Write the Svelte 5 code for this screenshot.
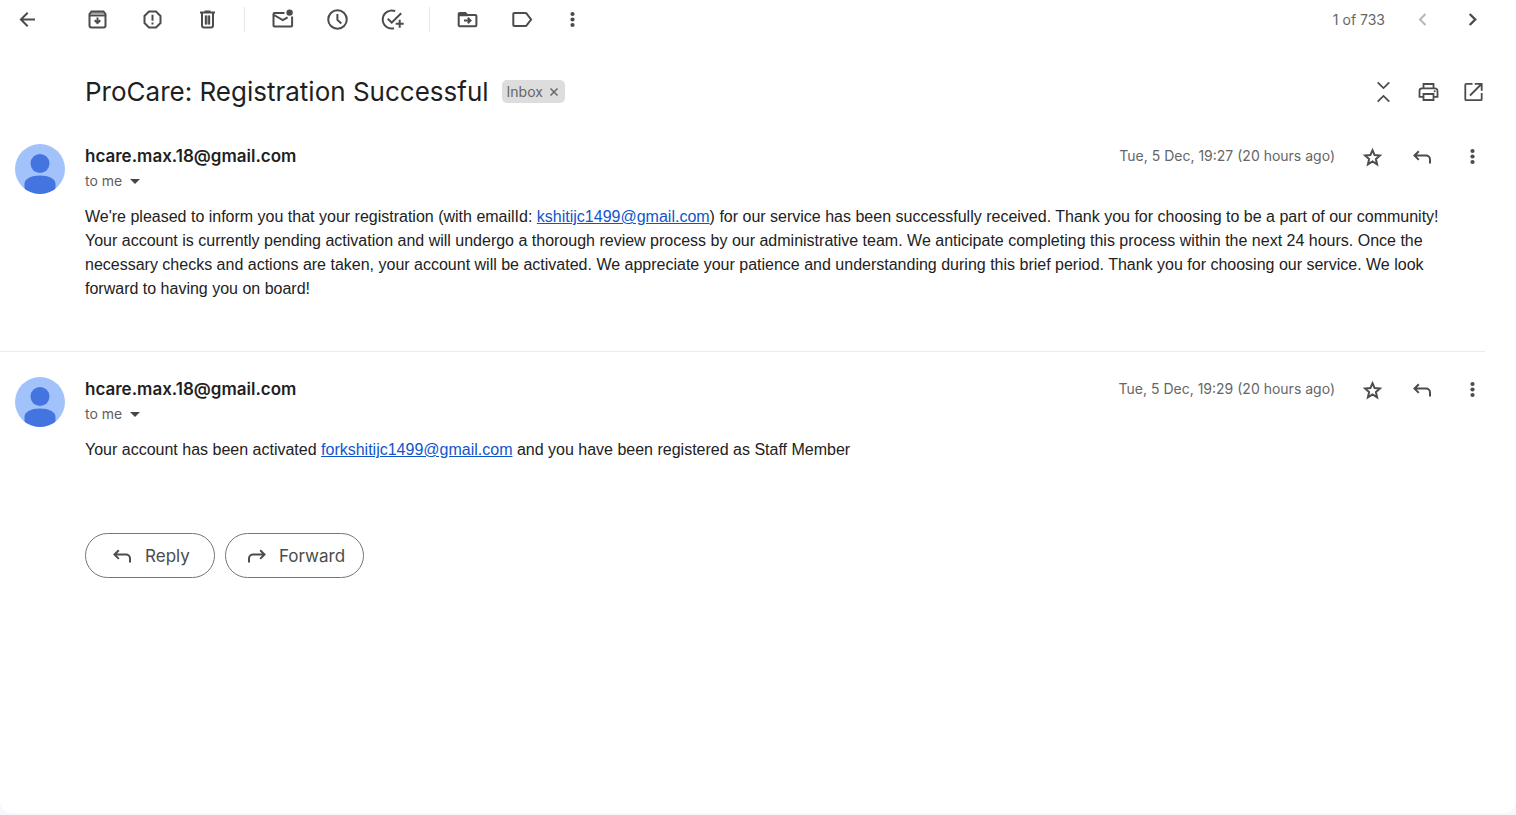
<script>
  const messages = [
    {
      id: 'm1',
      sender: 'hcare.max.18@gmail.com',
      date: 'Tue, 5 Dec, 19:27 (20 hours ago)',
      before: "We're pleased to inform you that your registration (with emailId: ",
      link: 'kshitijc1499@gmail.com',
      after:
        ') for our service has been successfully received. Thank you for choosing to be a part of our community! Your account is currently pending activation and will undergo a thorough review process by our administrative team. We anticipate completing this process within the next 24 hours. Once the necessary checks and actions are taken, your account will be activated. We appreciate your patience and understanding during this brief period. Thank you for choosing our service. We look forward to having you on board!'
    },
    {
      id: 'm2',
      sender: 'hcare.max.18@gmail.com',
      date: 'Tue, 5 Dec, 19:29 (20 hours ago)',
      before: 'Your account has been activated ',
      link: 'forkshitijc1499@gmail.com',
      after: ' and you have been registered as Staff Member'
    }
  ];
  const toolGroups = [
    [['archive', 'Archive'], ['spam', 'Report spam'], ['trash', 'Delete']],
    [['mail', 'Mark as unread'], ['clock', 'Snooze'], ['task', 'Add to tasks']],
    [['move', 'Move to'], ['label', 'Labels'], ['more', 'More']]
  ];
</script>

{#snippet icon(name)}
  <svg class="icon" viewBox="0 0 25 25" aria-hidden="true">
    {#if name === 'back'}
      <path d="M20 12.5H6.5M12.7 5.7l-6.800 6.800 6.800 6.800" />
    {:else if name === 'archive'}
      <path d="M4.5 7v11.5a2 2 0 0 0 2 2h12a2 2 0 0 0 2-2V7l-2-2.5h-12z" />
      <path class="soft" d="M5 5h15v4H5z" />
      <path d="M4.5 8.7h16" stroke-width="1.5" />
      <path d="M12.5 10.5v5M9.7 13.3l2.8 2.8 2.8-2.8" />
    {:else if name === 'spam'}
      <path d="M9 4.5h7l4.5 4.500v7L16 20.500H9L4.500 16V9z" />
      <path d="M12.500 7.800v6M12.500 15.500v2" />
    {:else if name === 'trash'}
      <path d="M5 5.500h15M9.500 4.500h6M7 6v12.500a2 2 0 0 0 2 2h7a2 2 0 0 0 2-2V6M10.800 8.500v9M14.200 8.500v9" />
      <path class="soft" d="M10 8.500h5v9h-5z" />
    {:else if name === 'mail'}
      <path d="M14.500 6.100H4.500a1 1 0 0 0-1 1v11.300a1 1 0 0 0 1 1h16.600a1 1 0 0 0 1-1V9.500M4 8l8.800 5.200 4.800-2.800" />
      <circle class="fill" cx="19.600" cy="5.600" r="3.200" />
    {:else if name === 'clock'}
      <circle cx="12.500" cy="12.500" r="9.300" />
      <path d="M12.400 7v5.900l3.900 3.700" />
    {:else if name === 'task'}
      <path d="M15.200 4.200A9 9 0 1 0 14 21.200M7.800 11.800l3.900 3.900L21.200 6.200M19.700 12.800v8M15.700 16.800h8" />
    {:else if name === 'move'}
      <path d="M3.700 6.500v11.700a1 1 0 0 0 1 1h15.700a1 1 0 0 0 1-1V9.100a1 1 0 0 0-1-1h-8l-2-2H4.700a1 1 0 0 0-1 1" />
      <path class="fill" d="M3.500 6h7l2.500 3.200H3.500z" />
      <path d="M9 13.500h6M12.800 10.800l2.700 2.700-2.700 2.700" />
    {:else if name === 'label'}
      <path d="M4.300 6h11.300a1 1 0 0 1 .8.400l4.700 6.100-4.700 6.100a1 1 0 0 1-.8.400H4.300a1 1 0 0 1-1-1V7a1 1 0 0 1 1-1z" />
    {:else if name === 'more'}
      <g class="fill"><circle cx="12.500" cy="7" r="2.100" /><circle cx="12.500" cy="12.500" r="2.100" /><circle cx="12.500" cy="18" r="2.100" /></g>
    {:else if name === 'prev'}
      <path d="M15.500 7l-5.500 5.500 5.500 5.500" />
    {:else if name === 'next'}
      <path d="M9.700 7l5.500 5.500-5.500 5.500" stroke-width="2.400" />
    {:else if name === 'collapse'}
      <path d="M6.700 3.300l5.800 5.800 5.800-5.800M6.700 22.700l5.800-5.800 5.800 5.800" stroke-width="1.800" />
    {:else if name === 'print'}
      <path d="M7.500 9V5h10v4M7.500 17.800H3.500v-6a2.500 2.500 0 0 1 2.500-2.500h13a2.500 2.500 0 0 1 2.500 2.500v6h-4M7.500 15h10v6h-10z" stroke-width="1.800" />
      <circle class="fill" cx="18.700" cy="12.300" r="1" />
    {:else if name === 'open'}
      <path d="M11.500 4.800H5.300a1 1 0 0 0-1 1v14.400a1 1 0 0 0 1 1h14.400a1 1 0 0 0 1-1v-6.200M13.800 4.800h6.900v6.900M20.500 5L9 16.500" stroke-width="1.800" />
    {:else if name === 'star'}
      <path d="M12.500 6.200l2.100 4.900 5.300.5-4 3.500 1.200 5.200-4.600-2.800-4.600 2.800 1.200-5.200-4-3.500 5.300-.5z" />
    {:else if name === 'reply'}
      <path d="M8.800 7.300L4.500 11.600l4.300 4.300M4.500 11.600h11.500a4 4 0 0 1 4 4v3.900" />
    {:else if name === 'forward'}
      <path d="M16.200 7.300l4.300 4.300-4.300 4.300M20.500 11.600H9a4 4 0 0 0-4 4v3.900" />
    {/if}
  </svg>
{/snippet}

<main>
  <div class="toolbar">
    <button class="tool back" aria-label="Back to Inbox">{@render icon('back')}</button>
    {#each toolGroups as group, i}
      {#if i > 0}<span class="separator"></span>{/if}
      {#each group as [name, label]}
        <button class="tool" class:narrow={name === 'more'} aria-label={label}>{@render icon(name)}</button>
      {/each}
    {/each}
    <span class="count">1 of 733</span>
    <button class="action faded" aria-label="Newer" disabled>{@render icon('prev')}</button>
    <button class="action" aria-label="Older">{@render icon('next')}</button>
  </div>

  <header>
    <h1>ProCare: Registration Successful</h1>
    <span class="chip">Inbox
      <button aria-label="Remove label Inbox">
        <svg viewBox="0 0 10 10" aria-hidden="true"><path d="M1.500 1.500l7 7M8.500 1.500l-7 7" /></svg>
      </button>
    </span>
    <div class="header-actions">
      <button class="tool narrow" aria-label="Collapse all">{@render icon('collapse')}</button>
      <button class="tool narrow" aria-label="Print all">{@render icon('print')}</button>
      <button class="tool narrow" aria-label="In new window">{@render icon('open')}</button>
    </div>
  </header>

  {#each messages as message (message.id)}
    <article>
      <svg class="avatar" viewBox="0 0 50 50" aria-hidden="true">
        <clipPath id="clip-{message.id}"><circle cx="25" cy="25" r="25" /></clipPath>
        <g clip-path="url(#clip-{message.id})">
          <path fill="#a1c2fa" d="M0 0h50v50H0z" />
          <circle cx="25" cy="19.500" r="9.500" fill="#4374e0" />
          <path fill="#4374e0" d="M9.500 50V40c0-5.500 7-8.500 15.500-8.500S40.500 34.500 40.500 40v10z" />
        </g>
      </svg>
      <div class="content">
        <div class="meta">
          <div class="from">
            <h2>{message.sender}</h2>
            <button class="recipient">to me
              <svg viewBox="0 0 10 5" aria-hidden="true"><path d="M0 0h10L5 5z" /></svg>
            </button>
          </div>
          <time>{message.date}</time>
          <button class="action" aria-label="Star">{@render icon('star')}</button>
          <button class="action" aria-label="Reply">{@render icon('reply')}</button>
          <button class="action" aria-label="More">{@render icon('more')}</button>
        </div>
        <p>{message.before}<a href="mailto:{message.link}">{message.link}</a>{message.after}</p>
      </div>
    </article>
  {/each}

  <div class="responses">
    <button>{@render icon('reply')}Reply</button>
    <button>{@render icon('forward')}Forward</button>
  </div>
</main>

<style>
  :global(body) {
    margin: 0;
    background: #f6f8fc;
  }
  main {
    box-sizing: border-box;
    min-height: calc(100vh - 2px);
    background: #fff;
    border-radius: 0 0 12px 12px;
    color: #1f1f1f;
    font-family: Inter, sans-serif;
  }
  button {
    display: flex;
    align-items: center;
    justify-content: center;
    padding: 0;
    border: 0;
    background: none;
    color: #4a4d4c;
    font: inherit;
    cursor: pointer;
  }
  .icon {
    display: block;
    flex: none;
    width: 25px;
    height: 25px;
    fill: none;
    stroke: currentColor;
    stroke-width: 2;
  }
  .icon .fill {
    fill: currentColor;
    stroke: none;
  }
  .icon .soft {
    fill: currentColor;
    stroke: none;
    opacity: 0.5;
  }
  .toolbar {
    display: flex;
    align-items: center;
    height: 39px;
    padding-right: 19px;
  }
  .tool {
    flex: none;
    width: 55px;
    height: 39px;
  }
  .narrow {
    width: 45px;
  }
  .back {
    margin-right: 15px;
  }
  .separator {
    width: 1px;
    height: 25px;
    margin: 0 10px 0 9px;
    background: #e3e8ec;
  }
  .count {
    margin: 0 12px 0 auto;
    color: #666;
    font-size: 14px;
  }
  .action {
    flex: none;
    width: 50px;
    height: 25px;
  }
  .faded {
    opacity: 0.4;
  }
  header {
    display: flex;
    align-items: center;
    padding: 33px 20px 33px 85px;
  }
  h1 {
    margin: 0;
    font-size: 26px;
    font-weight: 400;
    line-height: 39px;
  }
  .chip {
    display: flex;
    align-items: center;
    gap: 6px;
    height: 23px;
    margin-left: 13px;
    padding: 0 6px 0 5px;
    border-radius: 5px;
    background: #ddd;
    color: #666;
    font-size: 14px;
  }
  .chip button {
    color: #666;
  }
  .chip svg {
    width: 10px;
    height: 10px;
    stroke: currentColor;
    stroke-width: 1.5;
  }
  .header-actions {
    display: flex;
    margin-left: auto;
  }
  article {
    display: flex;
    gap: 20px;
    margin-right: 31px;
    padding: 0 0 50px 15px;
  }
  article + article {
    padding-top: 25px;
    border-top: 1px solid #e9ebee;
  }
  .avatar {
    flex: none;
    width: 50px;
    height: 50px;
  }
  .content {
    flex: 1;
    min-width: 0;
  }
  .meta {
    display: flex;
    align-items: flex-start;
    margin-right: -12px;
  }
  .from {
    margin-right: auto;
  }
  h2 {
    margin: 0;
    font-size: 17px;
    font-weight: 600;
    line-height: 24px;
  }
  .recipient {
    gap: 8px;
    color: #5e5e5e;
    font-size: 14px;
    line-height: 26px;
  }
  .recipient svg {
    width: 10px;
    height: 5px;
    fill: #444746;
  }
  time {
    margin-right: 12px;
    color: #666;
    font-size: 14px;
    line-height: 24px;
  }
  p {
    margin: 11px 24px 0 0;
    color: #222;
    font: 16px/24px "Liberation Sans", Arial, sans-serif;
  }
  a {
    color: #15c;
  }
  .responses {
    display: flex;
    gap: 10px;
    padding: 21px 0 0 85px;
  }
  .responses button {
    box-sizing: border-box;
    gap: 10px;
    min-width: 130px;
    height: 45px;
    padding: 0 18px;
    border: 1px solid #747775;
    border-radius: 23px;
    font-size: 17px;
  }
</style>
